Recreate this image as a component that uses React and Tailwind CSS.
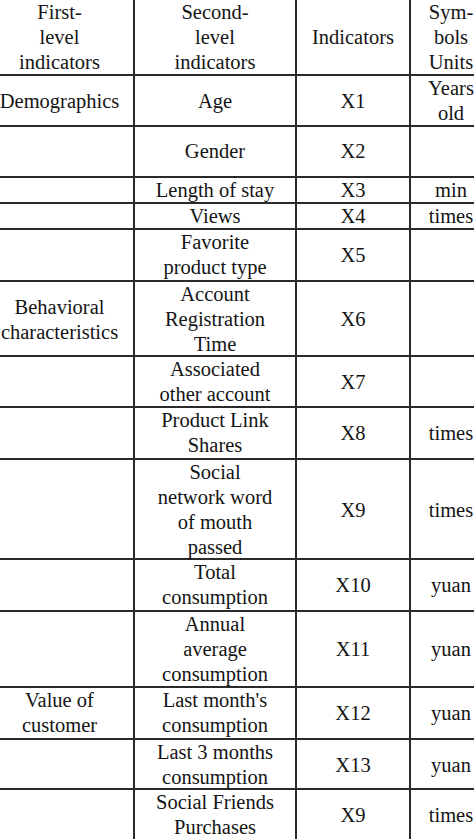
import React from 'react';

const rows = [
  { h: 'h-[76px]', a: ['First-', 'level', 'indicators'], b: ['Second-', 'level', 'indicators'], c: ['Indicators'], d: ['Sym-', 'bols', 'Units'] },
  { h: 'h-[51px]', a: ['Demographics'], b: ['Age'], c: ['X1'], d: ['Years', 'old'] },
  { h: 'h-[51px]', a: [], b: ['Gender'], c: ['X2'], d: [] },
  { h: 'h-[26px]', a: [], b: ['Length of stay'], c: ['X3'], d: ['min'] },
  { h: 'h-[26px]', a: [], b: ['Views'], c: ['X4'], d: ['times'] },
  { h: 'h-[52px]', a: [], b: ['Favorite', 'product type'], c: ['X5'], d: [] },
  { h: 'h-[75px]', a: ['Behavioral', 'characteristics'], b: ['Account', 'Registration', 'Time'], c: ['X6'], d: [] },
  { h: 'h-[51px]', a: [], b: ['Associated', 'other account'], c: ['X7'], d: [] },
  { h: 'h-[52px]', a: [], b: ['Product Link', 'Shares'], c: ['X8'], d: ['times'] },
  { h: 'h-[100px]', a: [], b: ['Social', 'network word', 'of mouth', 'passed'], c: ['X9'], d: ['times'] },
  { h: 'h-[52px]', a: [], b: ['Total', 'consumption'], c: ['X10'], d: ['yuan'] },
  { h: 'h-[76px]', a: [], b: ['Annual', 'average', 'consumption'], c: ['X11'], d: ['yuan'] },
  { h: 'h-[52px]', a: ['Value of', 'customer'], b: ["Last month's", 'consumption'], c: ['X12'], d: ['yuan'] },
  { h: 'h-[50px]', a: [], b: ['Last 3 months', 'consumption'], c: ['X13'], d: ['yuan'] },
  { h: 'h-[49px]', a: [], b: ['Social Friends', 'Purchases'], c: ['X9'], d: ['times'], last: true },
];

const Cell = ({ lines, className }) => (
  <div className={`flex flex-col items-center justify-center text-center whitespace-nowrap ${className}`}>
    {lines.map((l, i) => (
      <span key={i}>{l}</span>
    ))}
  </div>
);

export default function App() {
  return (
    <div className="font-serif">
      <div className="w-[474px] h-[839px] overflow-hidden bg-white text-[#141414] text-[20.5px] leading-[25px] font-['Liberation_Serif']">
        <div className="w-[491px]">
          {rows.map((r, i) => (
            <div
              key={i}
              className={`grid grid-cols-[135px_162px_114px_80px] ${r.h} ${r.last ? '' : 'border-b-2 border-[#2a2a2a]'}`}
            >
              <Cell lines={r.a} className="border-r-2 border-[#2a2a2a] pr-[14px]" />
              <Cell lines={r.b} className="border-r-2 border-[#2a2a2a]" />
              <Cell lines={r.c} className="border-r-2 border-[#2a2a2a]" />
              <Cell lines={r.d} className="" />
            </div>
          ))}
        </div>
      </div>
    </div>
  );
}
